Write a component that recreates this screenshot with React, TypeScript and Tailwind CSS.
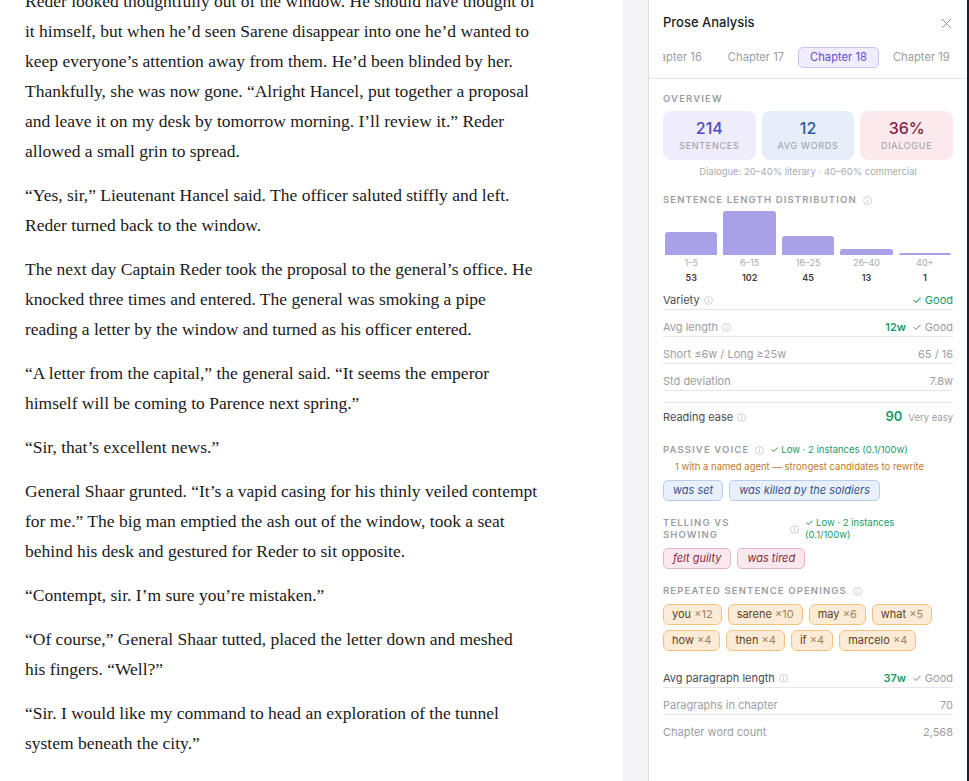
import { X } from "lucide-react";

const paragraphs: React.ReactNode[] = [
  "Reder looked thoughtfully out of the window. He should have thought of it himself, but when he’d seen Sarene disappear into one he’d wanted to keep everyone’s attention away from them. He’d been blinded by her. Thankfully, she was now gone. “Alright Hancel, put together a proposal and leave it on my desk by tomorrow morning. I’ll review it.” Reder allowed a small grin to spread.",
  "“Yes, sir,” Lieutenant Hancel said. The officer saluted stiffly and left. Reder turned back to the window.",
  "The next day Captain Reder took the proposal to the general’s office. He knocked three times and entered. The general was smoking a pipe reading a letter by the window and turned as his officer entered.",
  "“A letter from the capital,” the general said. “It seems the emperor himself will be coming to Parence next spring.”",
  "“Sir, that’s excellent news.”",
  "General Shaar grunted. “It’s a vapid casing for his thinly veiled contempt for me.” The big man emptied the ash out of the window, took a seat behind his desk and gestured for Reder to sit opposite.",
  "“Contempt, sir. I’m sure you’re mistaken.”",
  <>
    “Of course,” General Shaar tutted, placed the letter down and meshed{" "}
    <span className="whitespace-nowrap">his fingers.</span> “Well?”
  </>,
  "“Sir. I would like my command to head an exploration of the tunnel system beneath the city.”",
  "“The tunnels?” The general leaned back in his chair and regarded him for a long moment.",
];

const chapters = ["Chapter 16", "Chapter 17", "Chapter 18", "Chapter 19", "Chapter 20"];

const buckets = [
  { range: "1–5", count: 53 },
  { range: "6–15", count: 102 },
  { range: "16–25", count: 45 },
  { range: "26–40", count: 13 },
  { range: "40+", count: 1 },
];

const openings = [
  ["you", 12],
  ["sarene", 10],
  ["may", 6],
  ["what", 5],
  ["how", 4],
  ["then", 4],
  ["if", 4],
  ["marcelo", 4],
] as const;

function Info() {
  return (
    <svg width="9" height="9" viewBox="0 0 10 10" className="shrink-0 text-[#c4c4c8]">
      <circle cx="5" cy="5" r="4.4" fill="none" stroke="currentColor" strokeWidth="0.9" />
      <line x1="5" y1="4.3" x2="5" y2="7.4" stroke="currentColor" strokeWidth="1" />
      <circle cx="5" cy="2.8" r="0.6" fill="currentColor" />
    </svg>
  );
}

function SectionLabel({ children, info }: { children: React.ReactNode; info?: boolean }) {
  return (
    <div className="flex items-center gap-[6px] text-[9.5px] leading-[12px] font-semibold tracking-[0.12em] text-[#9c9ca3] uppercase">
      {children}
      {info && <Info />}
    </div>
  );
}

function Row({
  label,
  dark,
  info,
  border = true,
  children,
}: {
  label: string;
  dark?: boolean;
  info?: boolean;
  border?: boolean;
  children: React.ReactNode;
}) {
  return (
    <div
      className={`flex items-center justify-between pt-[10px] pb-[2px] text-[11px] leading-[14px] ${
        border ? "border-b border-[#e6e4ef]" : ""
      }`}
    >
      <div className={`flex items-center gap-[4px] ${dark ? "text-[#4b4b52]" : "text-[#9d9da4]"}`}>
        {label}
        {info && <Info />}
      </div>
      <div className="flex items-center gap-[6px]">{children}</div>
    </div>
  );
}

export default function App() {
  const max = Math.max(...buckets.map((b) => b.count));

  return (
    <div className="flex h-[781px] w-full overflow-hidden bg-white" style={{ fontFamily: "Inter, 'Noto Sans', sans-serif" }}>
      {/* manuscript, scrolled a little past the top */}
      <div className="flex-1 overflow-hidden">
        <div
          className="-mt-[14px] w-[539px] pl-[25px] text-[17.5px] leading-[30px] text-[#1a1a1a]"
          style={{ fontFamily: "'Liberation Serif', Georgia, serif" }}
        >
          {paragraphs.map((p, i) => (
            <p key={i} className="mb-[14px]">
              {p}
            </p>
          ))}
        </div>
      </div>

      {/* gutter */}
      <div className="w-[26px] shrink-0 border-r border-[#dedaee] bg-[#f4f4f6]" />

      {/* analysis panel */}
      <aside className="flex w-[320px] shrink-0 flex-col border-r-2 border-[#1d2033] bg-white">
        <div className="border-b border-[#e6e4ef] px-[14px] pt-[14px] pb-[10px]">
          <div className="flex h-[18px] items-center justify-between">
            <h2 className="text-[13px] font-medium text-[#1c1c1f]">Prose Analysis</h2>
            <X size={17} strokeWidth={1.4} className="mr-[-2px] text-[#8e8e94]" />
          </div>
          <div className="mt-[15px] overflow-hidden">
            <div className="-ml-[30px] flex gap-[2px]">
              {chapters.map((c) => (
                <div
                  key={c}
                  className={`shrink-0 whitespace-nowrap rounded-[5px] border px-[11px] text-[11.2px] leading-[19px] ${
                    c === "Chapter 18"
                      ? "border-[#cbc3f4] bg-[#efecfd] text-[#5e51cc]"
                      : "border-transparent text-[#9d9da4]"
                  }`}
                >
                  {c}
                </div>
              ))}
            </div>
          </div>
        </div>

        <div className="px-[14px]">
          <div className="mt-[14px]">
            <SectionLabel>Overview</SectionLabel>
          </div>
          <div className="mt-[6px] grid grid-cols-3 gap-[6px]">
            <div className="flex h-[49px] flex-col items-center justify-center rounded-[8px] bg-[#efedfb]">
              <div className="text-[16px] leading-[20px] font-medium text-[#5549c2]">214</div>
              <div className="mt-[1px] text-[9px] tracking-[0.08em] text-[#9b9ba3]">SENTENCES</div>
            </div>
            <div className="flex h-[49px] flex-col items-center justify-center rounded-[8px] bg-[#e6eef9]">
              <div className="text-[16px] leading-[20px] font-medium text-[#285c9c]">12</div>
              <div className="mt-[1px] text-[9px] tracking-[0.08em] text-[#9b9ba3]">AVG WORDS</div>
            </div>
            <div className="flex h-[49px] flex-col items-center justify-center rounded-[8px] bg-[#fbe9ee]">
              <div className="text-[16px] leading-[20px] font-medium text-[#862441]">36%</div>
              <div className="mt-[1px] text-[9px] tracking-[0.08em] text-[#9b9ba3]">DIALOGUE</div>
            </div>
          </div>
          <div className="mt-[6px] text-center text-[9.5px] leading-[12px] text-[#ababb1]">
            Dialogue: 20–40% literary · 40–60% commercial
          </div>

          <div className="mt-[16px]">
            <SectionLabel info>Sentence length distribution</SectionLabel>
          </div>
          <div className="mt-[5px] flex h-[44px] items-end gap-[6px] px-[2px]">
            {buckets.map((b) => (
              <div
                key={b.range}
                className="flex-1 rounded-t-[3px] bg-[#a9a1e7]"
                style={{ height: Math.max(2, Math.round((b.count / max) * 44)) }}
              />
            ))}
          </div>
          <div className="mt-[2px] flex gap-[6px] px-[2px]">
            {buckets.map((b) => (
              <div key={b.range} className="flex-1 text-center">
                <div className="text-[9px] leading-[12px] text-[#a9a9af]">{b.range}</div>
                <div className="mt-[3px] text-[9px] leading-[12px] font-semibold text-[#3a3a3f]">{b.count}</div>
              </div>
            ))}
          </div>

          <div className="-mt-[1px]">
            <Row label="Variety" dark info>
              <span className="text-[11px] text-[#1a9a67]">✓ Good</span>
            </Row>
            <Row label="Avg length" info>
              <span className="font-semibold text-[#1a9a67]">12w</span>
              <span className="text-[#9d9da4]">✓ Good</span>
            </Row>
            <Row label="Short ≤6w / Long ≥25w">
              <span className="text-[#9d9da4]">65 / 16</span>
            </Row>
            <Row label="Std deviation">
              <span className="text-[#9d9da4]">7.8w</span>
            </Row>
          </div>

          <div className="mt-[11px] flex h-[29px] items-center justify-between border-t border-[#e6e4ef] text-[11px]">
            <div className="flex items-center gap-[4px] text-[#4b4b52]">
              Reading ease
              <Info />
            </div>
            <div className="flex items-baseline gap-[6px]">
              <span className="text-[13px] font-semibold text-[#1a9a67]">90</span>
              <span className="text-[9.5px] text-[#9d9da4]">Very easy</span>
            </div>
          </div>

          <div className="mt-[13px] flex items-center gap-[6px]">
            <SectionLabel info>Passive voice</SectionLabel>
            <span className="text-[9.5px] leading-[12px] text-[#1a9a67]">✓ Low · 2 instances (0.1/100w)</span>
          </div>
          <div className="mt-[5px] pl-[12px] text-[9.5px] leading-[12px] text-[#c27b26]">
            1 with a named agent — strongest candidates to rewrite
          </div>
          <div className="mt-[7px] flex gap-[6px]">
            {["was set", "was killed by the soldiers"].map((t) => (
              <span
                key={t}
                className="rounded-[5px] border border-[#b8cdf0] bg-[#e8f0fc] px-[9px] text-[11px] leading-[19px] italic text-[#33548d]"
              >
                {t}
              </span>
            ))}
          </div>

          <div className="mt-[16px] flex items-center">
            <div className="w-[127px] text-[9.5px] leading-[12px] font-semibold tracking-[0.12em] text-[#9c9ca3] uppercase">
              Telling vs
              <br />
              showing
            </div>
            <Info />
            <span className="ml-[6px] w-[110px] text-[9.5px] leading-[12px] text-[#1a9a67]">
              ✓ Low · 2 instances (0.1/100w)
            </span>
          </div>
          <div className="mt-[7px] flex gap-[6px]">
            {["felt guilty", "was tired"].map((t) => (
              <span
                key={t}
                className="rounded-[5px] border border-[#e8b3c3] bg-[#fbe8ee] px-[9px] text-[11px] leading-[19px] italic text-[#852848]"
              >
                {t}
              </span>
            ))}
          </div>

          <div className="mt-[16px]">
            <SectionLabel info>Repeated sentence openings</SectionLabel>
          </div>
          <div className="mt-[7px] flex flex-wrap gap-x-[6px] gap-y-[5px]">
            {openings.map(([w, n]) => (
              <span
                key={w}
                className="rounded-[6px] border border-[#f1c27c] bg-[#fcebd6] px-[8px] text-[11px] leading-[19px] text-[#5e421d]"
              >
                {w} <span className="text-[#a0825c]">×{n}</span>
              </span>
            ))}
          </div>

          <div className="mt-[10px]">
            <Row label="Avg paragraph length" dark info>
              <span className="font-semibold text-[#1a9a67]">37w</span>
              <span className="text-[#9d9da4]">✓ Good</span>
            </Row>
            <Row label="Paragraphs in chapter">
              <span className="text-[#9d9da4]">70</span>
            </Row>
            <Row label="Chapter word count" border={false}>
              <span className="text-[#9d9da4]">2,568</span>
            </Row>
          </div>
        </div>
      </aside>
    </div>
  );
}
